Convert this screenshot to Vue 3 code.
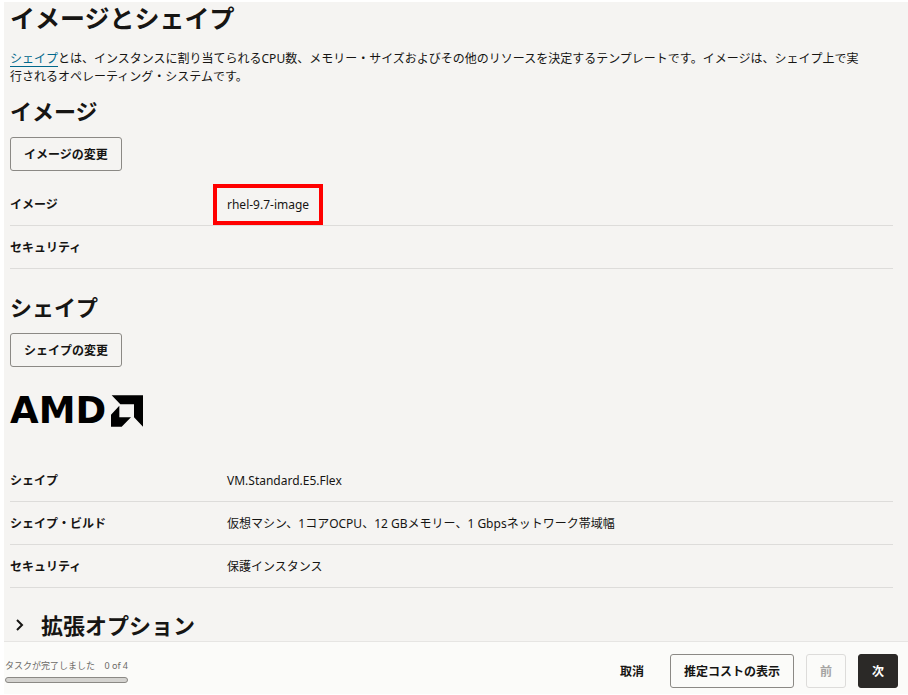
<script setup>
import { ref } from "vue";

const imageRows = [
  { label: "イメージ", value: "rhel-9.7-image", marked: true },
  { label: "セキュリティ", value: "" },
];

const shapeRows = [
  { label: "シェイプ", value: "VM.Standard.E5.Flex" },
  { label: "シェイプ・ビルド", value: "仮想マシン、1コアOCPU、12 GBメモリー、1 Gbpsネットワーク帯域幅" },
  { label: "セキュリティ", value: "保護インスタンス" },
];

const done = ref(0);
const total = 4;
const expanded = ref(false);
</script>

<template>
  <div class="page">
    <main class="content">
      <h1>イメージとシェイプ</h1>
      <p class="intro">
        <a href="#shape">シェイプ</a>とは、インスタンスに割り当てられるCPU数、メモリー・サイズおよびその他のリソースを決定するテンプレートです。イメージは、シェイプ上で実行されるオペレーティング・システムです。
      </p>

      <section>
        <h2>イメージ</h2>
        <button type="button" class="btn">イメージの変更</button>
        <dl class="details">
          <div v-for="row in imageRows" :key="row.label" class="row">
            <dt>{{ row.label }}</dt>
            <dd :class="{ marked: row.marked }">{{ row.value }}</dd>
          </div>
        </dl>
      </section>

      <section id="shape" class="shape">
        <h2>シェイプ</h2>
        <button type="button" class="btn">シェイプの変更</button>
        <div class="logo">
          <span>AMD</span>
          <svg viewBox="0 0 96 94" aria-hidden="true">
            <path d="M2 0H96V94L69 66V27H28Z" />
            <path d="M25 31V66H60L32 94H0V58Z" />
          </svg>
        </div>
        <dl class="details">
          <div v-for="row in shapeRows" :key="row.label" class="row">
            <dt>{{ row.label }}</dt>
            <dd>{{ row.value }}</dd>
          </div>
        </dl>
      </section>

      <h2 class="advanced">
        <button type="button" :aria-expanded="expanded" @click="expanded = !expanded">
          <svg viewBox="0 0 18 18" :class="{ open: expanded }" aria-hidden="true">
            <path d="M7 4L12 9L7 14" />
          </svg>
          拡張オプション
        </button>
      </h2>
    </main>

    <footer class="footer">
      <div class="progress">
        <div class="progress-text">
          <span>タスクが完了しました</span>
          <span>{{ done }} of {{ total }}</span>
        </div>
        <div class="track" role="progressbar" aria-label="タスクが完了しました" :aria-valuenow="done" :aria-valuemax="total">
          <div class="fill" :style="{ width: (done / total) * 100 + '%' }"></div>
        </div>
      </div>
      <div class="actions">
        <button type="button" class="btn plain">取消</button>
        <button type="button" class="btn">推定コストの表示</button>
        <button type="button" class="btn" disabled>前</button>
        <button type="button" class="btn primary">次</button>
      </div>
    </footer>
  </div>
</template>

<style>
body {
  background: #fff;
}
</style>

<style scoped>
.page {
  box-sizing: border-box;
  min-height: 100vh;
  padding: 2px 0 1px 4px;
  display: flex;
  flex-direction: column;
  font-family: "Noto Sans", "Noto Sans CJK JP", sans-serif;
  font-size: 12px;
  line-height: 18px;
  color: #161513;
}
.content {
  flex: 1;
  padding: 0 15px 2px 6px;
  background: #f5f4f2;
}
h1,
h2 {
  margin: 0;
  font-weight: 700;
}
h1 {
  font-size: 25px;
  line-height: 32px;
}
h2 {
  font-size: 22px;
  line-height: 28px;
}
.intro {
  margin: 16px 0 11px;
  padding-right: 24px;
}
.intro a {
  color: #00688c;
  text-underline-offset: 3px;
}
.btn {
  box-sizing: border-box;
  height: 34px;
  padding: 2px 13px 0;
  border: 1px solid #8b8985;
  border-radius: 3px;
  background: transparent;
  color: #161513;
  font: inherit;
  font-weight: 700;
}
section > .btn {
  display: block;
  margin-top: 12px;
}
.details {
  margin: 12px 0 0;
}
.row {
  display: grid;
  grid-template-columns: 217px 1fr;
  padding: 13px 0 11px;
  border-bottom: 1px solid #dddcda;
}
dt {
  font-weight: 700;
}
dd {
  margin: 0;
}
.marked {
  position: relative;
  justify-self: start;
}
.marked::after {
  content: "";
  position: absolute;
  inset: -12px -14px -11px;
  border: 4px solid #f00;
}
.shape {
  margin-top: 24px;
}
.logo {
  display: flex;
  align-items: center;
  gap: 5px;
  margin: 28px 0 32px;
  height: 32px;
  color: #000;
}
.logo span {
  font-family: "DejaVu Sans", sans-serif;
  font-size: 37px;
  font-weight: 700;
  line-height: 32px;
}
.logo svg {
  width: 32px;
  height: 32px;
  fill: #000;
}
.advanced {
  margin-top: 23px;
}
.advanced button {
  display: flex;
  align-items: center;
  gap: 13px;
  padding: 0;
  border: 0;
  background: none;
  color: inherit;
  font: inherit;
}
.advanced svg {
  width: 18px;
  height: 18px;
  fill: none;
  stroke: #161513;
  stroke-width: 2;
}
.advanced svg.open {
  transform: rotate(90deg);
}
.footer {
  display: flex;
  align-items: center;
  justify-content: space-between;
  padding: 12px 10px 6px 1px;
  border-top: 1px solid #e6e5e3;
  background: #fbfbf9;
}
.progress {
  width: 123px;
  padding-bottom: 3px;
}
.progress-text {
  display: flex;
  justify-content: space-between;
  font-size: 9px;
  color: #6b6966;
}
.track {
  box-sizing: border-box;
  height: 6px;
  margin-top: 2px;
  border: 1px solid #8b8985;
  border-radius: 3px;
  background: #d4d3d0;
  overflow: hidden;
}
.fill {
  height: 100%;
  background: #161513;
}
.actions {
  display: flex;
  gap: 12px;
}
.btn.plain {
  border-color: transparent;
}
.btn:disabled {
  border-color: #dddcda;
  color: #a5a4a2;
}
.btn.primary {
  border-color: #2b2927;
  background: #2b2927;
  color: #fff;
}
</style>
